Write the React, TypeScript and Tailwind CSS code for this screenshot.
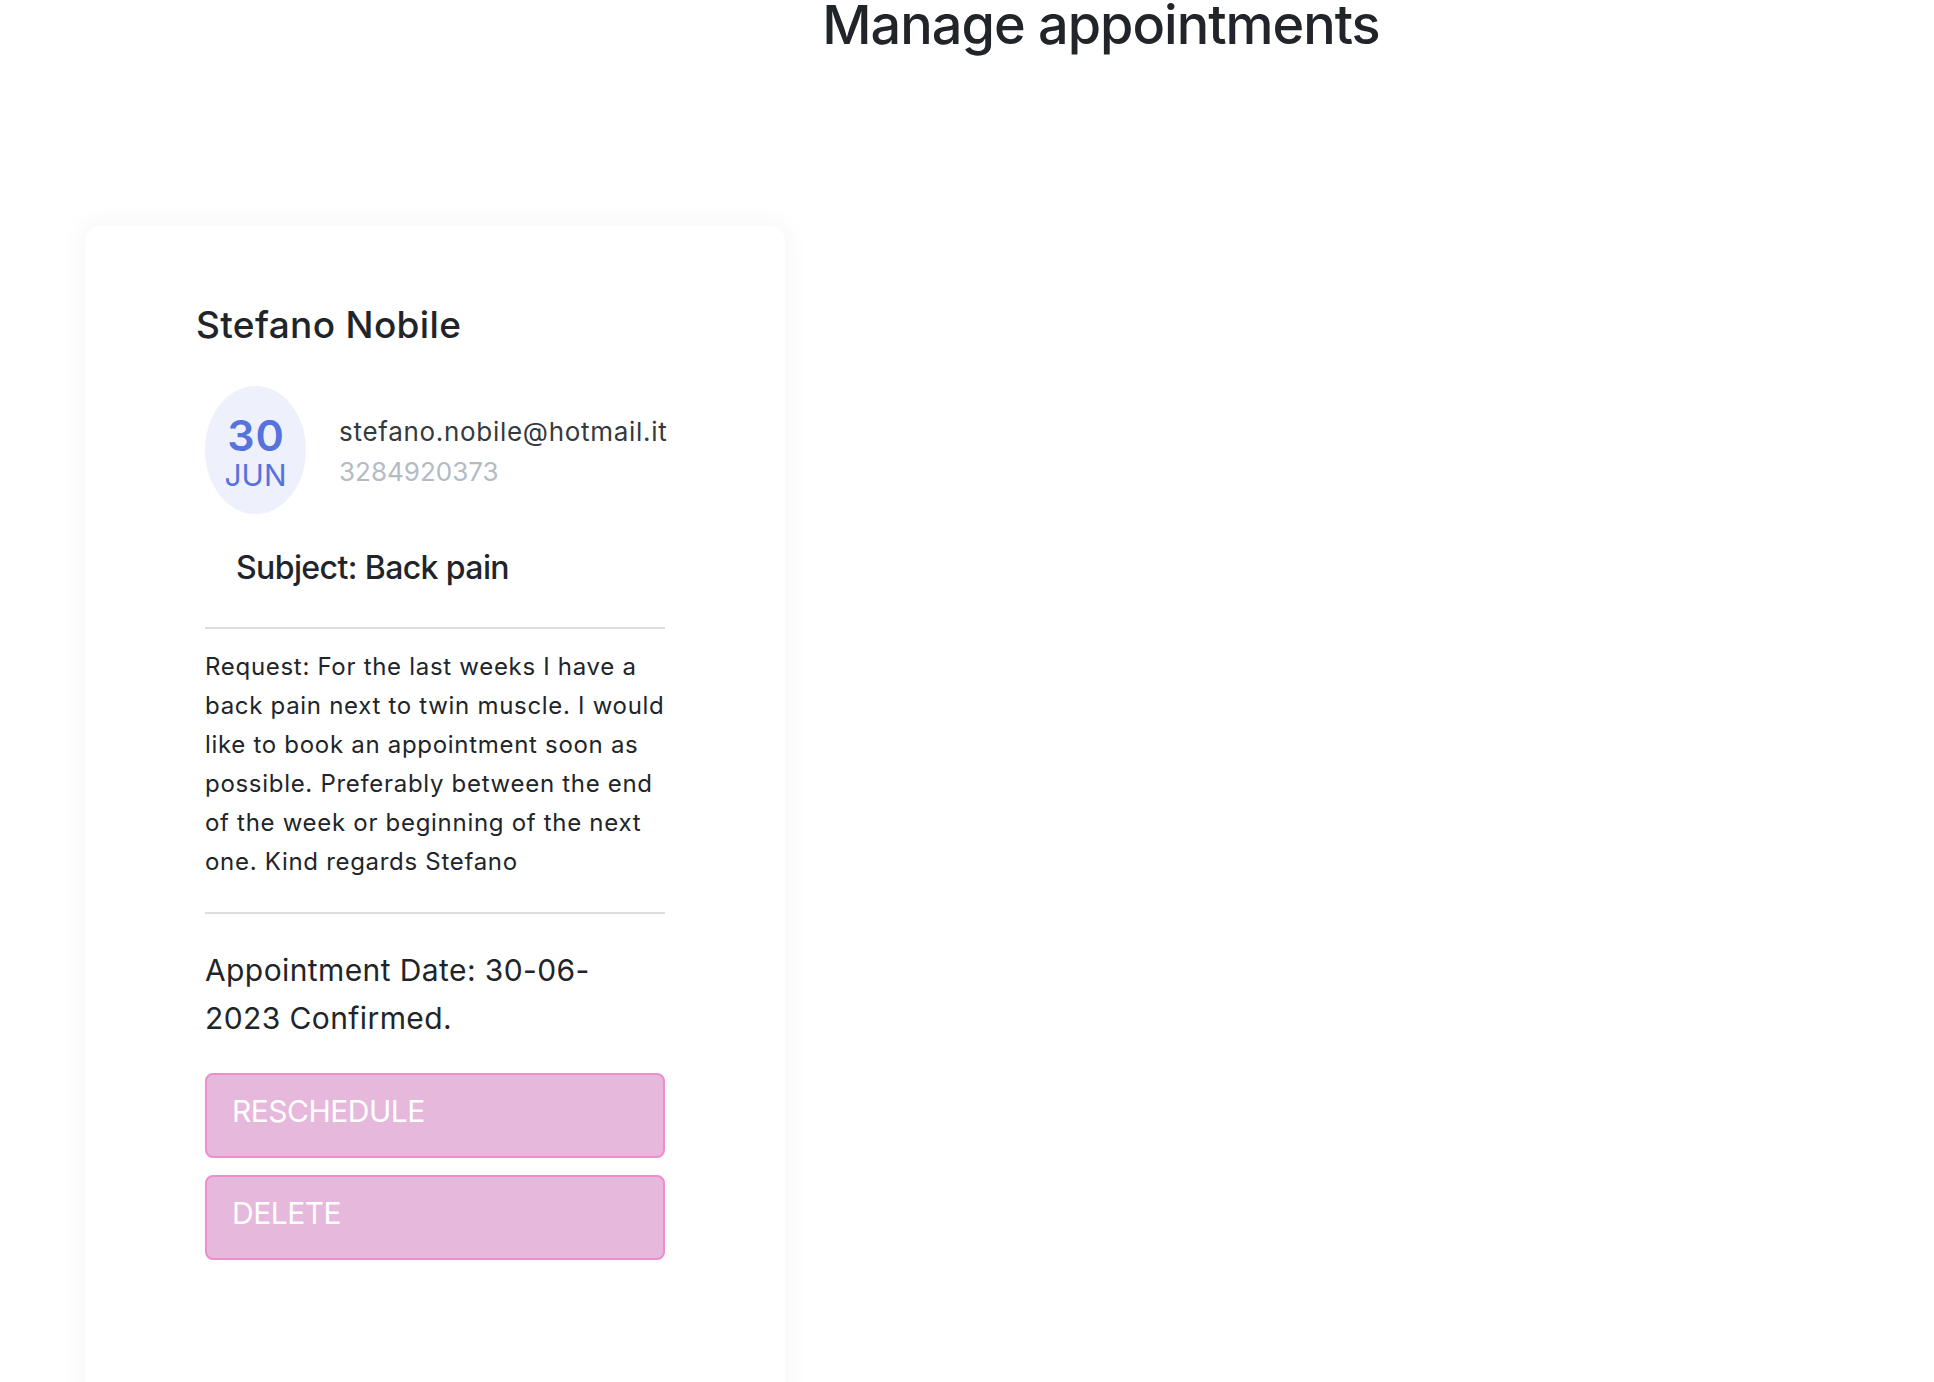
const request =
  "Request: For the last weeks I have a back pain next to twin muscle. I would like to book an appointment soon as possible. Preferably between the end of the week or beginning of the next one. Kind regards Stefano";

const AppointmentCard = () => {
  return (
    <div className="ml-[85px] w-[700px] rounded-[15px] bg-white pt-[77px] pb-[160px] shadow-[0_0_22px_6px_rgba(0,0,0,0.035)]">
      <h2 className="pl-[111px] text-[37px] leading-[1.2] font-medium tracking-[0.35px] text-[#212529]">
        Stefano Nobile
      </h2>

      <div className="px-[120px]">
        {/* date bubble + contacts */}
        <div className="mt-[39px] flex items-center gap-[33px]">
          <div className="flex h-[128px] w-[101px] shrink-0 flex-col items-center justify-center rounded-[50%] bg-[#eef0fb] pt-[7px] text-[#5672dd]">
            <span className="pl-[1px] text-[43px] leading-[43px] font-semibold tracking-[1px]">
              30
            </span>
            <span className="text-[30px] leading-[36px]">JUN</span>
          </div>
          <div className="mt-[4px] flex flex-col">
            <span className="text-[26px] leading-[40px] tracking-[0.7px] text-[#343a40]">
              stefano.nobile@hotmail.it
            </span>
            <span className="text-[26px] leading-[40px] text-[#b3bbc6]">
              3284920373
            </span>
          </div>
        </div>

        <h3 className="mt-[35px] pl-[31px] text-[32px] leading-[1.2] font-medium tracking-[-0.6px] text-[#212529]">
          Subject: Back pain
        </h3>

        <hr className="mt-[39px] h-[2px] border-0 bg-[#dcdddf]" />

        <p className="mt-[18px] text-[24px] leading-[39px] tracking-[0.7px] text-[#212529]">
          {request}
        </p>

        <hr className="mt-[31px] h-[2px] border-0 bg-[#dcdddf]" />

        <p className="mt-[32px] max-w-[450px] text-[30px] leading-[48px] tracking-[0.4px] text-[#212529]">
          Appointment Date: 30-06-<wbr />2023 Confirmed.
        </p>

        <div className="mt-[31px] flex flex-col gap-[17px]">
          <button
            type="button"
            className="rounded-[8px] border-2 border-[#f08ccf] bg-[#e6b8db] pt-[14px] pb-[22px] pl-[25px] text-left text-[30px] leading-[45px] tracking-[-0.5px] text-white"
          >
            RESCHEDULE
          </button>
          <button
            type="button"
            className="rounded-[8px] border-2 border-[#f08ccf] bg-[#e6b8db] pt-[14px] pb-[22px] pl-[25px] text-left text-[30px] leading-[45px] tracking-[-0.5px] text-white"
          >
            DELETE
          </button>
        </div>
      </div>
    </div>
  );
};

const App = () => {
  return (
    <div className="min-h-screen bg-white font-['Inter',sans-serif] text-[#212529]">
      <h1 className="-mt-[2px] pl-[268px] text-center text-[54px] leading-none font-medium tracking-[-1px] text-[#212529]">
        Manage appointments
      </h1>
      <div className="mt-[174px]">
        <AppointmentCard />
      </div>
    </div>
  );
};

export default App;
